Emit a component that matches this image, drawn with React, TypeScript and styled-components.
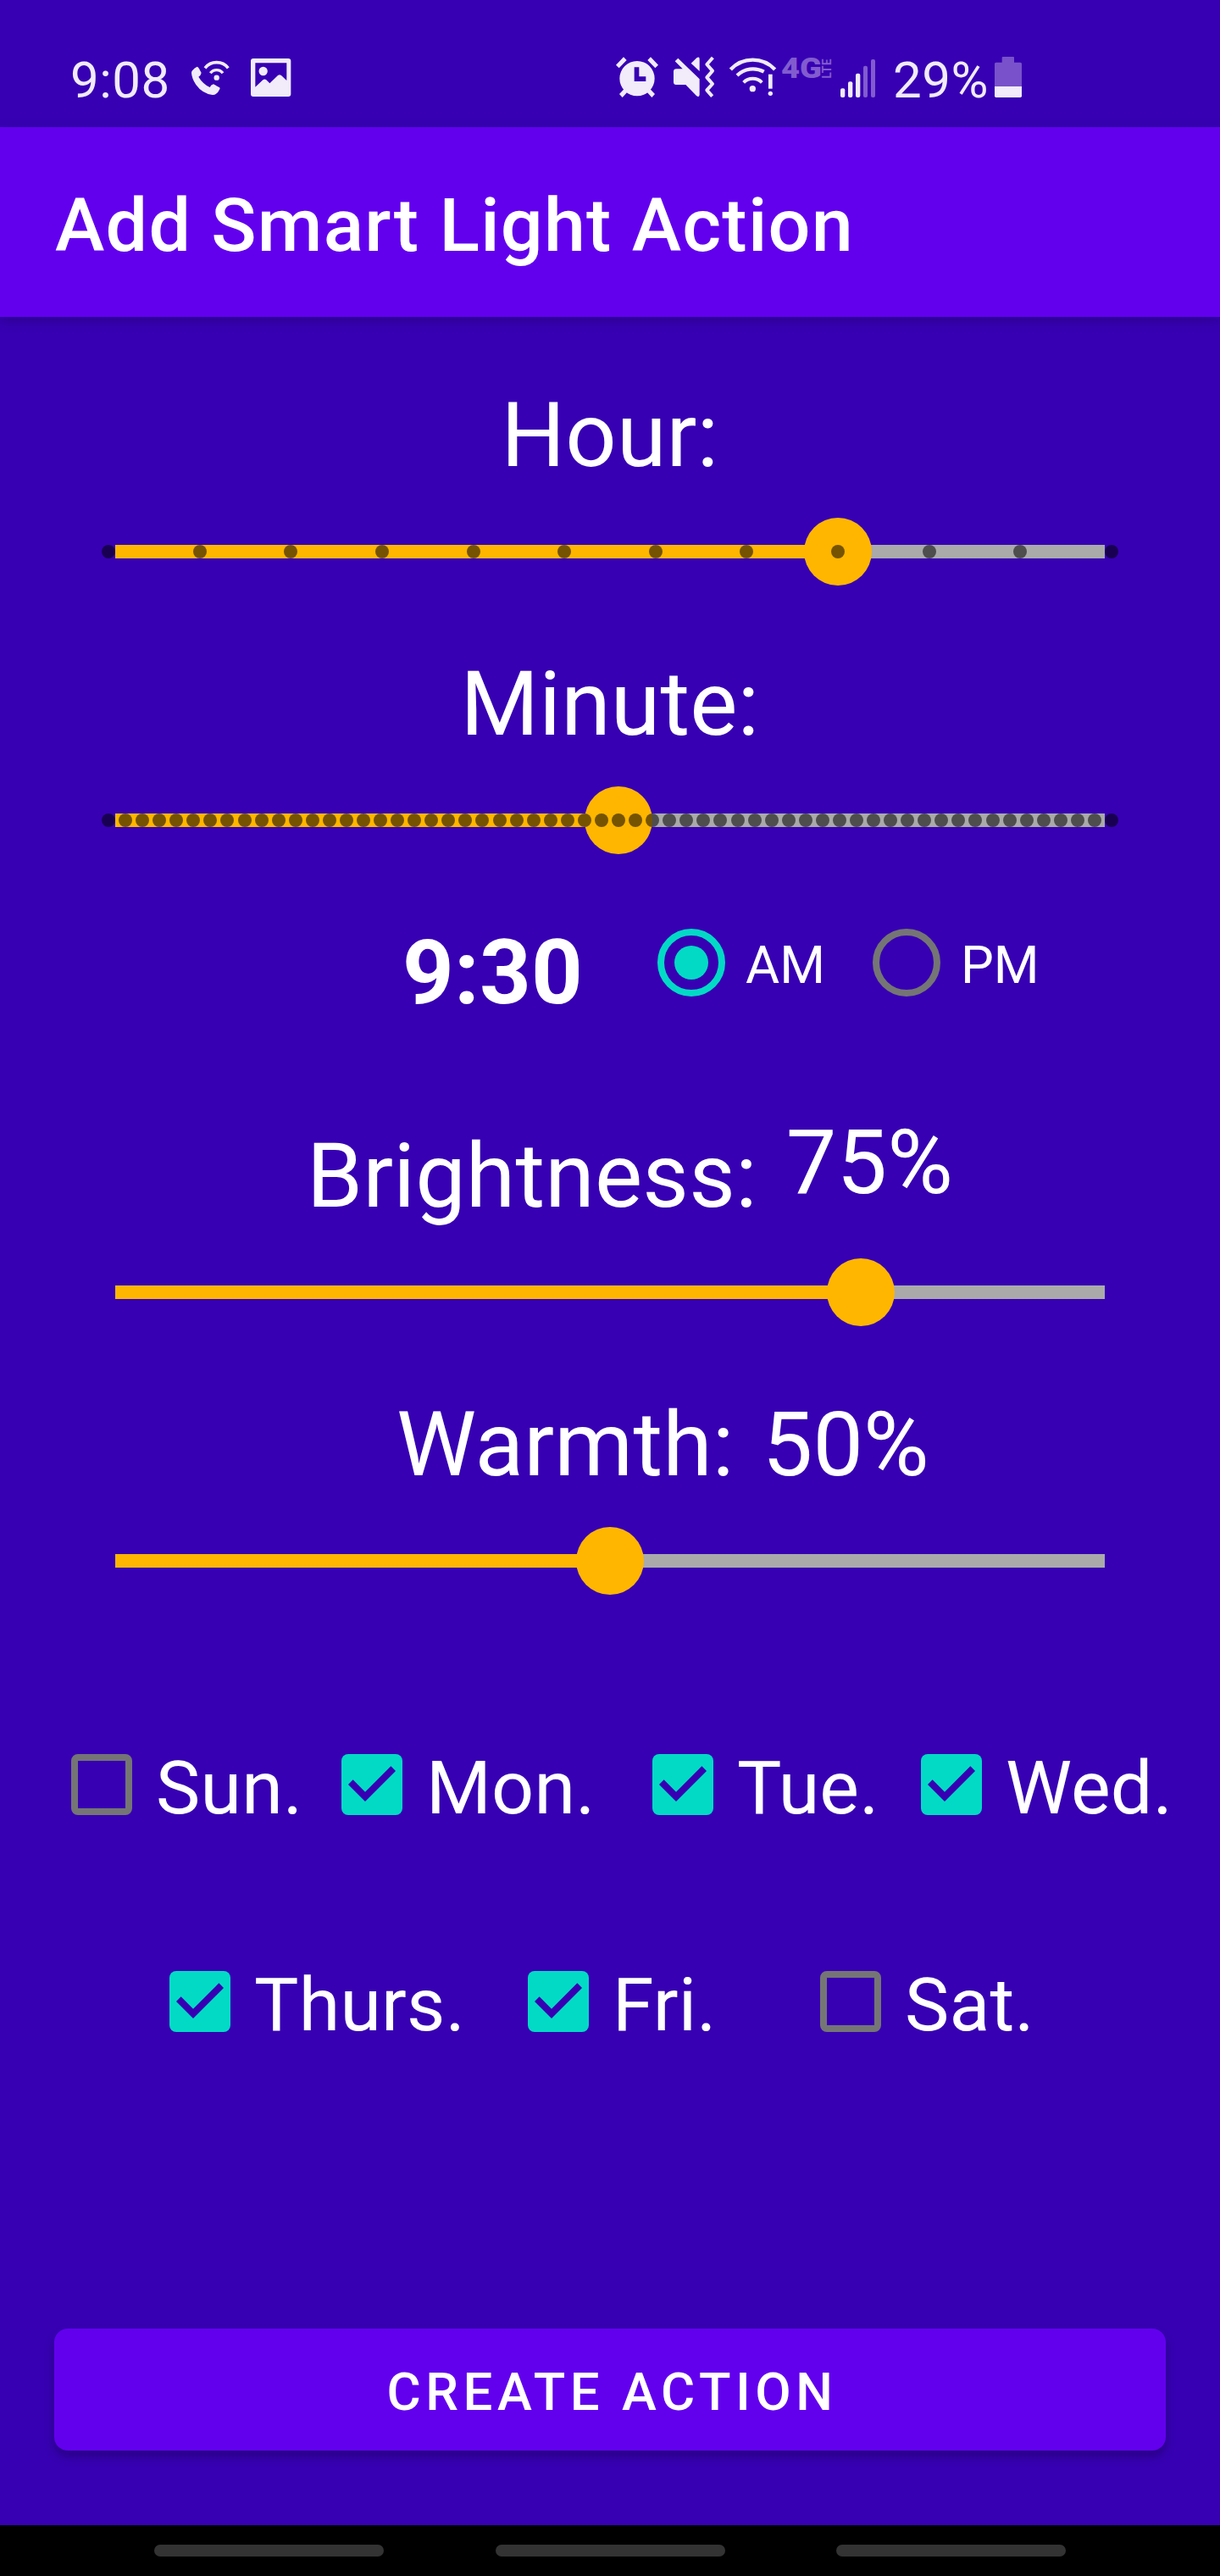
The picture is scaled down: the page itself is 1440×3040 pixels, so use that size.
import React, { useState } from "react";
import styled, { createGlobalStyle } from "styled-components";

const color = {
  background: "#3700b3",
  primary: "#6200ee",
  amber: "#ffb600",
  track: "#aaaaaa",
  teal: "#03dac6",
  outline: "#757575",
  status: "#f1ebfa",
  statusDim: "#825bcf",
};

const GlobalStyle = createGlobalStyle`
  *, *::before, *::after { box-sizing: border-box; }
  html, body { margin: 0; padding: 0; background: ${color.background}; }
`;

const Screen = styled.div`
  width: 1440px;
  height: 3040px;
  display: flex;
  flex-direction: column;
  overflow: hidden;
  background: ${color.background};
  color: #fff;
  font-family: Roboto, "Liberation Sans", sans-serif;
`;

/* ---------- status bar ---------- */

const StatusBar = styled.div`
  height: 150px;
  flex: none;
  display: flex;
  align-items: center;
  padding: 32px 234px 0 83px;
  color: ${color.status};
`;

const StatusText = styled.span<{ $width: number; $before?: number }>`
  width: ${(p) => p.$width}px;
  margin-left: ${(p) => p.$before ?? 0}px;
  padding-top: 7px;
  font-size: 60px;
  line-height: 72px;
  letter-spacing: 0.5px;
  white-space: nowrap;
`;

const StatusGroup = styled.div<{ $end?: boolean }>`
  display: flex;
  align-items: center;
  margin-left: ${(p) => (p.$end ? "auto" : "0")};
`;

const Glyph = styled.svg<{ $before: number }>`
  display: block;
  flex: none;
  overflow: visible;
  margin-left: ${(p) => p.$before}px;
`;

const Network = styled.div`
  display: flex;
  align-items: center;
  height: 24px;
  margin: 0 0 21px 6px;
  width: 60px;
  gap: 1px;
  color: ${color.statusDim};
`;

const Generation = styled.span`
  width: 48px;
  font-size: 32.5px;
  line-height: 24px;
  font-weight: 900;
  transform: scaleX(1.17);
  transform-origin: 0 0;
`;

const Lte = styled.span`
  writing-mode: vertical-rl;
  transform: rotate(180deg);
  font-size: 14px;
  line-height: 11px;
  font-weight: 700;
  letter-spacing: 0.4px;
`;

type StatusIconProps = {
  x: number;
  width: number;
  before: number;
  children: React.ReactNode;
};

/* Status glyphs share one 144-unit tall grid, drawn at a third of its size. */
function StatusIcon({ x, width, before, children }: StatusIconProps) {
  return (
    <Glyph
      $before={before}
      width={width / 3}
      height={48}
      viewBox={`${x} 81 ${width} 144`}
      fill={color.status}
      aria-hidden
    >
      {children}
    </Glyph>
  );
}

/* ---------- app bar ---------- */

const AppBar = styled.header`
  height: 224px;
  flex: none;
  display: flex;
  align-items: center;
  padding: 8px 65px 0;
  background: ${color.primary};
  box-shadow: 0 4px 14px rgba(0, 0, 0, 0.22);
`;

const Title = styled.h1`
  margin: 0;
  font-size: 88px;
  line-height: 104px;
  font-weight: 500;
  letter-spacing: 1.22px;
  white-space: nowrap;
`;

/* ---------- form ---------- */

const Form = styled.main`
  flex: 1;
  display: flex;
  flex-direction: column;
  padding: 78px 0 88px;
`;

const Field = styled.section<{ $after: number }>`
  display: flex;
  flex-direction: column;
  gap: 35px;
  margin-bottom: ${(p) => p.$after}px;
`;

const LabelRow = styled.div<{ $left?: number; $gap?: number }>`
  height: 124px;
  display: flex;
  align-items: flex-start;
  justify-content: ${(p) => (p.$left ? "flex-start" : "center")};
  padding-left: ${(p) => p.$left ?? 0}px;
  gap: ${(p) => p.$gap ?? 0}px;
`;

const Label = styled.span<{ $raise?: number }>`
  margin-top: ${(p) => -(p.$raise ?? 0)}px;
  font-size: 106px;
  line-height: 124px;
  letter-spacing: 0.15px;
  white-space: nowrap;
`;

const Clock = styled(Label)`
  width: 282px;
  font-weight: 700;
`;

const SliderBox = styled.div`
  position: relative;
  height: 80px;
  margin: 0 128px;
  display: flex;
  align-items: center;
`;

const Track = styled.div`
  flex: 1;
  height: 16px;
  margin: 0 8px;
  background: ${color.track};
`;

const Fill = styled.div`
  height: 16px;
  background: ${color.amber};
`;

const Thumb = styled.div`
  position: absolute;
  top: 0;
  width: 80px;
  height: 80px;
  margin-left: -40px;
  border-radius: 50%;
  background: ${color.amber};
`;

const Tick = styled.i`
  position: absolute;
  top: 32px;
  width: 16px;
  height: 16px;
  margin-left: -8px;
  border-radius: 50%;
  background: rgba(0, 0, 0, 0.54);
`;

function Slider({ value, max, ticks }: { value: number; max: number; ticks?: boolean }) {
  const at = (n: number) => (n / max) * 1184;
  return (
    <SliderBox role="slider" aria-valuenow={value} aria-valuemax={max}>
      <Track>
        <Fill style={{ width: at(value) - 8 }} />
      </Track>
      <Thumb style={{ left: at(value) }} />
      {ticks &&
        Array.from({ length: max + 1 }, (_, i) => <Tick key={i} style={{ left: at(i) }} />)}
    </SliderBox>
  );
}

const TimeRow = styled.div`
  height: 124px;
  display: flex;
  align-items: flex-start;
  padding-left: 475px;
  margin-bottom: 116px;
`;

const RadioOption = styled.div<{ $width: number }>`
  width: ${(p) => p.$width}px;
  height: 100px;
  margin-left: 19px;
  display: flex;
  align-items: center;
  gap: 24px;
`;

const RadioRing = styled.span<{ $on: boolean }>`
  width: 80px;
  height: 80px;
  flex: none;
  display: flex;
  align-items: center;
  justify-content: center;
  border: 8px solid ${(p) => (p.$on ? color.teal : color.outline)};
  border-radius: 50%;

  &::after {
    content: "";
    width: 40px;
    height: 40px;
    border-radius: 50%;
    background: ${(p) => (p.$on ? color.teal : "transparent")};
  }
`;

const RadioText = styled.span`
  padding-top: 6px;
  font-size: 61.6px;
  line-height: 72px;
`;

const DayRow = styled.div<{ $left: number; $columns: string; $after: number }>`
  height: 96px;
  display: grid;
  grid-template-columns: ${(p) => p.$columns};
  grid-template-rows: 96px;
  padding-left: ${(p) => p.$left}px;
  margin-bottom: ${(p) => p.$after}px;
`;

const DayOption = styled.div`
  display: flex;
  align-items: center;
  gap: 28px;
  padding-left: 12px;
  cursor: pointer;
`;

const Box = styled.span<{ $on: boolean }>`
  width: 72px;
  height: 72px;
  flex: none;
  border-radius: 8px;
  border: ${(p) => (p.$on ? "0" : `8px solid ${color.outline}`)};
  background: ${(p) => (p.$on ? color.teal : "transparent")};

  svg { display: block; }
`;

const DayText = styled.span`
  padding-top: 8px;
  font-size: 88px;
  line-height: 88px;
  letter-spacing: 0.2px;
  white-space: nowrap;
`;

const SubmitButton = styled.button`
  height: 144px;
  margin: auto 64px 0;
  padding: 5px 0 0 5px;
  border: 0;
  border-radius: 16px;
  background: ${color.primary};
  box-shadow: 0 7px 12px rgba(0, 0, 0, 0.26);
  color: #fff;
  font-family: inherit;
  font-size: 61.6px;
  line-height: 72px;
  font-weight: 500;
  letter-spacing: 5.6px;
  text-transform: uppercase;
`;

const NavBar = styled.nav`
  height: 60px;
  flex: none;
  display: flex;
  justify-content: space-between;
  align-items: center;
  padding: 0 182px;
  background: #000;
`;

const NavHint = styled.span`
  width: 271px;
  height: 14px;
  border-radius: 7px;
  background: #333;
`;

type Day = { name: string; on: boolean };

const week: Day[] = [
  { name: "Sun.", on: false },
  { name: "Mon.", on: true },
  { name: "Tue.", on: true },
  { name: "Wed.", on: true },
  { name: "Thurs.", on: true },
  { name: "Fri.", on: true },
  { name: "Sat.", on: false },
];

function DayCheck({ day, onToggle }: { day: Day; onToggle: () => void }) {
  return (
    <DayOption role="checkbox" aria-checked={day.on} onClick={onToggle}>
      <Box $on={day.on}>
        {day.on && (
          <svg width="72" height="72" viewBox="3 3 18 18" fill={color.background}>
            <path d="M10 17l-5-5 1.41-1.41L10 14.17l7.59-7.59L19 8z" />
          </svg>
        )}
      </Box>
      <DayText>{day.name}</DayText>
    </DayOption>
  );
}

export default function App() {
  const [days, setDays] = useState(week);
  const toggle = (name: string) =>
    setDays((all) => all.map((d) => (d.name === name ? { ...d, on: !d.on } : d)));
  const renderDay = (d: Day) => (
    <DayCheck key={d.name} day={d} onToggle={() => toggle(d.name)} />
  );

  return (
    <>
      <GlobalStyle />
      <Screen>
        <StatusBar>
          <StatusGroup>
            <StatusText $width={118}>9:08</StatusText>
            <StatusIcon x={497} width={135} before={24.7}>
              <path d="M500 130Q508 120 517 116Q521 117 524 123L532 138Q530 148 522 152Q537 177 562 189Q566 180 575 178L595 189Q600 192 596 197Q592 207 583 213Q578 217 571 216Q535 211 513 180Q498 158 497 138Q497 133 500 130Z" />
              <g fill="none" stroke={color.status}>
                <path d="M545 121A52 52 0 0 1 627 121" strokeWidth="11" />
                <path d="M564 139A27 27 0 0 1 608 139" strokeWidth="10" />
              </g>
              <circle cx="586" cy="155" r="9.5" />
            </StatusIcon>
            <StatusIcon x={709} width={142} before={25.7}>
              <path
                fillRule="evenodd"
                d="M718 87H842Q851 87 851 96V213Q851 222 842 222H718Q709 222 709 213V96Q709 87 718 87ZM725 103V188L752 163Q758 158 764 163L776 175L805 147Q811 142 817 147L836 165V103Z"
              />
              <circle cx="753" cy="132" r="15.5" />
            </StatusIcon>
          </StatusGroup>

          <StatusGroup $end>
            <StatusIcon x={80} width={151} before={0}>
              <path
                fillRule="evenodd"
                d="M155 96A62 62 0 1 0 155 220A62 62 0 1 0 155 96ZM145 118H162V151H186V168H145Z"
              />
              <path d="M80 110L107 82L118 93L91 121ZM230 110L203 82L192 93L219 121ZM92 213L109 195L120 206L103 225ZM218 213L201 195L190 206L207 225Z" />
            </StatusIcon>
            <StatusIcon x={286} width={144} before={18.3}>
              <path d="M302 86L378 160V215Q377 226 367 219L329 180H295Q286 180 286 171V134Q286 124 296 124H318L291 97Z" />
              <path d="M348 104L368 85Q378 78 378 89V132Z" />
              <path
                d="M425 84L404 108L424 131L404 154L424 177L404 199L423 221"
                fill="none"
                stroke={color.status}
                strokeWidth="12"
                strokeLinejoin="round"
              />
            </StatusIcon>
            <StatusIcon x={483} width={165} before={17.7}>
              <g fill="none" stroke={color.status}>
                <path d="M487 126A107 107 0 0 1 644 126" strokeWidth="13" />
                <path d="M510 147A80 80 0 0 1 605 134" strokeWidth="12.5" />
                <path d="M533 172A46 46 0 0 1 598 172" strokeWidth="12" />
              </g>
              <circle cx="565" cy="194" r="11" />
              <rect x="621" y="143" width="14" height="51" />
              <circle cx="628" cy="211" r="8" />
            </StatusIcon>
            <Network>
              <Generation>4G</Generation>
              <Lte>LTE</Lte>
            </Network>
            <StatusIcon x={276} width={123} before={10}>
              <rect x="276" y="193" width="16" height="32" rx="6" />
              <rect x="303" y="169" width="16" height="56" rx="6" />
              <rect x="330" y="140" width="16" height="85" rx="6" />
              <g fill={color.statusDim}>
                <rect x="357" y="113" width="15" height="112" rx="6" />
                <rect x="384" y="90" width="15" height="135" rx="6" />
              </g>
            </StatusIcon>
            <StatusText $width={112} $before={21}>
              29%
            </StatusText>
            <StatusIcon x={822} width={96} before={8}>
              <path
                fill="#7951ca"
                d="M851 81H888Q891 81 891 84V101H913Q918 101 918 106V186H822V106Q822 101 827 101H848V84Q848 81 851 81Z"
              />
              <path d="M822 186H918V220Q918 225 913 225H827Q822 225 822 220Z" />
            </StatusIcon>
          </StatusGroup>
        </StatusBar>

        <AppBar>
          <Title>Add Smart Light Action</Title>
        </AppBar>

        <Form>
          <Field $after={78}>
            <LabelRow>
              <Label>Hour:</Label>
            </LabelRow>
            <Slider value={8} max={11} ticks />
          </Field>

          <Field $after={78}>
            <LabelRow>
              <Label>Minute:</Label>
            </LabelRow>
            <Slider value={30} max={59} ticks />
          </Field>

          <TimeRow>
            <Clock>9:30</Clock>
            <RadioOption $width={235}>
              <RadioRing $on />
              <RadioText>AM</RadioText>
            </RadioOption>
            <RadioOption $width={235}>
              <RadioRing $on={false} />
              <RadioText>PM</RadioText>
            </RadioOption>
          </TimeRow>

          <Field $after={78}>
            <LabelRow $left={362} $gap={34}>
              <Label>Brightness:</Label>
              <Label $raise={16}>75%</Label>
            </LabelRow>
            <Slider value={75} max={100} />
          </Field>

          <Field $after={176}>
            <LabelRow $left={468} $gap={33}>
              <Label>Warmth:</Label>
              <Label>50%</Label>
            </LabelRow>
            <Slider value={50} max={100} />
          </Field>

          <DayRow $left={72} $columns="319px 367px 317px auto" $after={160}>
            {days.slice(0, 4).map(renderDay)}
          </DayRow>
          <DayRow $left={188} $columns="423px 345px auto" $after={0}>
            {days.slice(4).map(renderDay)}
          </DayRow>

          <SubmitButton type="button">Create action</SubmitButton>
        </Form>

        <NavBar>
          <NavHint />
          <NavHint />
          <NavHint />
        </NavBar>
      </Screen>
    </>
  );
}
